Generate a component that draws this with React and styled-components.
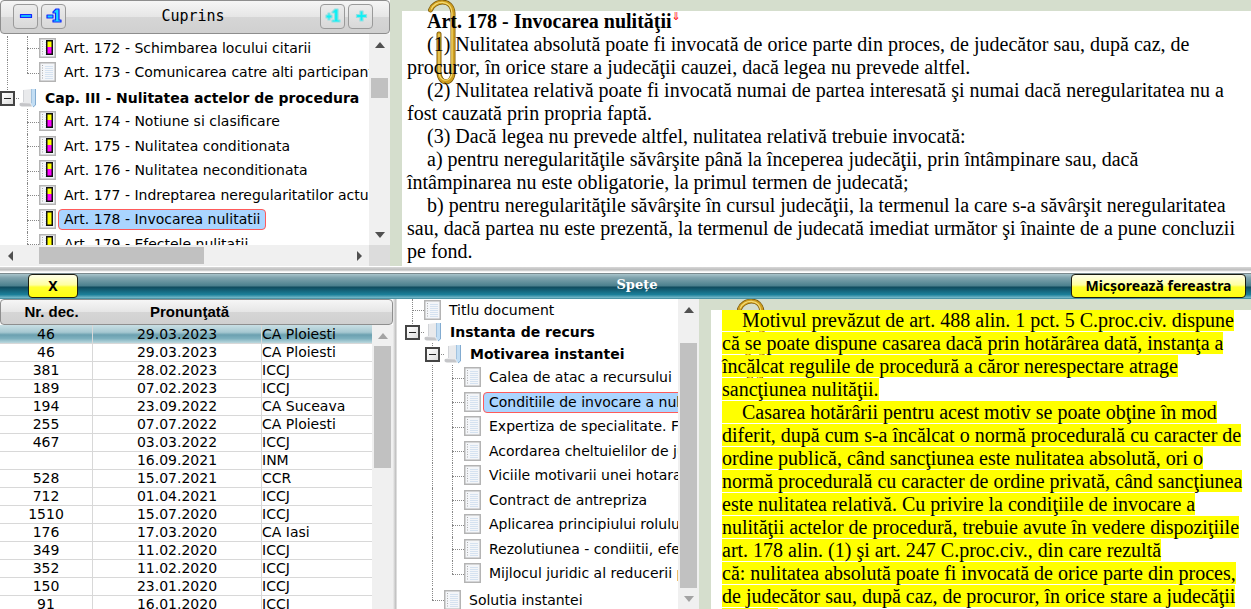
import React from 'react';
import styled, { createGlobalStyle, css } from 'styled-components';

const Green = '#d5decd';
const Track = '#f0f0f0';
const Thumb = '#c1c1c1';
const Highlight = '#ffff00';

const ui = '"DejaVu Sans", Verdana, sans-serif';
const serif = '"Liberation Serif", "Times New Roman", serif';

const articles = [
  { guides: ['line', 'tee'], icon: 'both', label: 'Art. 172 - Schimbarea locului citarii' },
  { guides: ['line', 'end'], icon: 'page', label: 'Art. 173 - Comunicarea catre alti participanti' },
  { guides: ['box'], icon: 'folder', label: 'Cap. III - Nulitatea actelor de procedura', gap: 2 },
  { guides: ['blank', 'tee'], icon: 'both', label: 'Art. 174 - Notiune si clasificare' },
  { guides: ['blank', 'tee'], icon: 'both', label: 'Art. 175 - Nulitatea conditionata' },
  { guides: ['blank', 'tee'], icon: 'both', label: 'Art. 176 - Nulitatea neconditionata' },
  { guides: ['blank', 'tee'], icon: 'both', label: 'Art. 177 - Indreptarea neregularitatilor actului' },
  { guides: ['blank', 'tee'], icon: 'yellow', label: 'Art. 178 - Invocarea nulitatii', selected: true },
  { guides: ['blank', 'tee'], icon: 'yellow', label: 'Art. 179 - Efectele nulitatii' },
];

const sections = [
  { guides: ['tee'], icon: 'page', label: 'Titlu document', short: true },
  { guides: ['box'], icon: 'folder', label: 'Instanta de recurs' },
  { guides: ['blank', 'box'], icon: 'folder', label: 'Motivarea instantei' },
  { guides: ['blank', 'line', 'tee'], icon: 'page', label: 'Calea de atac a recursului' },
  { guides: ['blank', 'line', 'tee'], icon: 'page', label: 'Conditiile de invocare a nulitatii', selected: true },
  { guides: ['blank', 'line', 'tee'], icon: 'page', label: 'Expertiza de specialitate. Forta' },
  { guides: ['blank', 'line', 'tee'], icon: 'page', label: 'Acordarea cheltuielilor de judecata' },
  { guides: ['blank', 'line', 'tee'], icon: 'page', label: 'Viciile motivarii unei hotarari' },
  { guides: ['blank', 'line', 'tee'], icon: 'page', label: 'Contract de antrepriza' },
  { guides: ['blank', 'line', 'tee'], icon: 'page', label: 'Aplicarea principiului rolului activ' },
  { guides: ['blank', 'line', 'tee'], icon: 'page', label: 'Rezolutiunea - condiitii, efecte' },
  { guides: ['blank', 'line', 'end'], icon: 'page', label: 'Mijlocul juridic al reducerii pretului' },
  { guides: ['blank', 'end'], icon: 'page', label: 'Solutia instantei', gap: 2 },
];

const decisions = [
  ['46', '29.03.2023', 'CA Ploiesti'],
  ['46', '29.03.2023', 'CA Ploiesti'],
  ['381', '28.02.2023', 'ICCJ'],
  ['189', '07.02.2023', 'ICCJ'],
  ['194', '23.09.2022', 'CA Suceava'],
  ['255', '07.07.2022', 'CA Ploiesti'],
  ['467', '03.03.2022', 'ICCJ'],
  ['', '16.09.2021', 'INM'],
  ['528', '15.07.2021', 'CCR'],
  ['712', '01.04.2021', 'ICCJ'],
  ['1510', '15.07.2020', 'ICCJ'],
  ['176', '17.03.2020', 'CA Iasi'],
  ['349', '11.02.2020', 'ICCJ'],
  ['352', '11.02.2020', 'ICCJ'],
  ['150', '23.01.2020', 'ICCJ'],
  ['91', '16.01.2020', 'ICCJ'],
];

const GlobalStyle = createGlobalStyle`
  html, body, #root {
    height: 100%;
    margin: 0;
  }
  body {
    overflow: hidden;
    background: #fff;
    color: #000;
    font-family: ${ui};
    font-size: 14px;
  }
  * {
    box-sizing: border-box;
  }
`;

const PageIcon = ({ mark }) => (
  <svg width='17' height='20' viewBox='0 0 17 20' aria-hidden='true'>
    <rect x='0.75' y='0.75' width='15.5' height='18.5' fill='#f4f6f9' stroke='#b4b4b4' strokeWidth='1.5' />
    <path d='M6 4.5h8M6 6.5h8M6 8.5h8M6 10.5h8M6 12.5h8M6 14.5h8M6 16.5h8' stroke='#d5e2f0' />
    <path d='M3.5 3v14' stroke='#aaa' strokeDasharray='1 1.5' />
    {mark && (
      <>
        <rect x='8' y='3' width='5' height='13' fill={mark === 'both' ? '#f0f' : '#ff0'} />
        <rect x='8' y='3' width='5' height='6' fill='#ff0' />
        <rect x='7.75' y='2.75' width='5.5' height='13.5' fill='none' stroke='#111' strokeWidth='1.5' />
      </>
    )}
  </svg>
);

const FolderIcon = () => (
  <svg width='18' height='20' viewBox='0 0 18 20' aria-hidden='true'>
    <path d='M4 2L12 1V16L14 18H2C0 18 0 16 1 15L4 14Z' fill='#e9eaec' />
    <path d='M4.500 2V14' stroke='#d2d4d8' />
    <path d='M1 15C0 17 1 18.500 3 18.500H13L11 15.500Z' fill='#c4c5c8' />
    <path d='M12 1H17V17L14 19L12 16Z' fill='#c3def4' />
    <path d='M16.500 1V17L14 19' fill='none' stroke='#82abd0' />
    <path d='M12.500 1V15' stroke='#a3c3df' />
  </svg>
);

const Clip = () => (
  <svg width='30' height='86' viewBox='0 0 30 86' aria-hidden='true'>
    <g fill='none' strokeLinecap='round'>
      <path d='M3.500 10C7 0 25 -2 26 13V72C26 85 12 85 12 72V34' stroke='#7d5b0c' strokeWidth='5' />
      <path d='M3.500 10C7 0 25 -2 26 13V72C26 85 12 85 12 72V34' stroke='#cf9f20' strokeWidth='3.500' />
      <path d='M4.500 9C8 0 24 -1 25 13V72C25 83 12 83 12 72V34' stroke='#f3da72' strokeWidth='1.200' />
    </g>
  </svg>
);

const StepIcon = ({ sign, one, color, edge }) => (
  <svg width='18' height='18' viewBox='0 0 18 18' aria-hidden='true'>
    <g stroke={edge} strokeWidth='1.2' fill={color} strokeLinejoin='round'>
      {!one && sign === 'minus' && <path d='M3.500 7.500H14.500V10.500H3.500Z' />}
      {!one && sign === 'plus' && <path d='M8 4H11V7.500H14.500V10.500H11V14H8V10.500H4.500V7.500H8Z' />}
      {one && sign === 'minus' && <path d='M2 8H8V11H2Z' />}
      {one && sign === 'plus' && <path d='M4 6H6V8H8V11H6V13H4V11H2V8H4Z' />}
      {one && <path d='M8 5L11 2H14V13H16V15H8V13H10.500V6H8Z' />}
    </g>
  </svg>
);

const Arrow = ({ dir, light }) => {
  const shapes = {
    up: 'M0 8L5 2L10 8Z',
    down: 'M0 2L5 8L10 2Z',
    left: 'M7 0L2 5L7 10Z',
    right: 'M3 0L8 5L3 10Z',
  };
  return (
    <svg width='10' height='10' viewBox='0 0 10 10' aria-hidden='true'>
      <path d={shapes[dir]} fill={light ? '#a3a3a3' : '#505050'} />
    </svg>
  );
};

const Scrollbar = ({ row, before, size, after, topLight, bottomLight, open }) => (
  <Bar $row={row}>
    <BarButton type='button' tabIndex={-1} aria-label={row ? 'Stânga' : 'Sus'}>
      <Arrow dir={row ? 'left' : 'up'} light={topLight} />
    </BarButton>
    <BarTrack $row={row}>
      <BarSpace $grow={before} />
      <BarThumb $grow={size} />
      <BarSpace $grow={after} />
    </BarTrack>
    {!open && (
      <BarButton type='button' tabIndex={-1} aria-label={row ? 'Dreapta' : 'Jos'}>
        <Arrow dir={row ? 'right' : 'down'} light={bottomLight} />
      </BarButton>
    )}
  </Bar>
);

const Tree = ({ items, indent, top }) => (
  <TreeList $indent={indent} $top={top}>
    {items.map((item) => (
      <TreeRow key={item.label} $folder={item.icon === 'folder'} $short={item.short} $gap={item.gap}>
        {item.guides.map((kind, i) => (
          <Guide key={i} $kind={kind}>
            {kind === 'box' && (
              <Toggle type='button' aria-label='Restrânge'>
                <ToggleMark />
              </Toggle>
            )}
          </Guide>
        ))}
        <IconSlot $folder={item.icon === 'folder'} $short={item.short}>
          {item.icon === 'folder' ? (
            <FolderIcon />
          ) : (
            <PageIcon mark={item.icon === 'page' ? null : item.icon} />
          )}
        </IconSlot>
        <TreeLabel href='#' $selected={item.selected} $folder={item.icon === 'folder'}>
          {item.label}
        </TreeLabel>
      </TreeRow>
    ))}
  </TreeList>
);

const App = () => {
  return (
    <Page>
      <GlobalStyle />
      <TopPane>
        <Contents>
          <Toolbar>
            <ToolGroup>
              <ToolButton type='button' aria-label='Restrânge tot'>
                <StepIcon sign='minus' color='#16b7ff' edge='#1524ff' />
              </ToolButton>
              <ToolButton type='button' aria-label='Restrânge un nivel'>
                <StepIcon sign='minus' one color='#16d8ff' edge='#1524ff' />
              </ToolButton>
            </ToolGroup>
            <ToolTitle>Cuprins</ToolTitle>
            <ToolGroup>
              <ToolButton type='button' aria-label='Extinde un nivel'>
                <StepIcon sign='plus' one color='#10f0f4' edge='#8fdfe2' />
              </ToolButton>
              <ToolButton type='button' aria-label='Extinde tot'>
                <StepIcon sign='plus' color='#10f0f4' edge='#8fdfe2' />
              </ToolButton>
            </ToolGroup>
          </Toolbar>
          <TreeFrame>
            <Tree items={articles} indent={0} top={2} />
            <Scrollbar before={23} size={20} after={125} />
            <Scrollbar row before={18} size={166} after={144} />
            <Corner />
          </TreeFrame>
        </Contents>
        <Document>
          <ClipSlot>
            <Clip />
          </ClipSlot>
          <Sheet>
            <Article $pad={5}>
              <h1>
                Art. 178 - Invocarea nulităţii<Mark>⇓</Mark>
              </h1>
              <p>(1) Nulitatea absolută poate fi invocată de orice parte din proces, de judecător sau, după caz, de procuror, în orice stare a judecăţii cauzei, dacă legea nu prevede altfel.</p>
              <p>(2) Nulitatea relativă poate fi invocată numai de partea interesată şi numai dacă neregularitatea nu a fost cauzată prin propria faptă.</p>
              <p>(3) Dacă legea nu prevede altfel, nulitatea relativă trebuie invocată:</p>
              <p>a) pentru neregularităţile săvârşite până la începerea judecăţii, prin întâmpinare sau, dacă întâmpinarea nu este obligatorie, la primul termen de judecată;</p>
              <p>b) pentru neregularităţile săvârşite în cursul judecăţii, la termenul la care s-a săvârşit neregularitatea sau, dacă partea nu este prezentă, la termenul de judecată imediat următor şi înainte de a pune concluzii pe fond.</p>
            </Article>
          </Sheet>
        </Document>
      </TopPane>

      <Splitter />

      <TitleBar>
        <YellowButton type='button' $narrow>
          X
        </YellowButton>
        <h2>Spețe</h2>
        <YellowButton type='button'>Micșorează fereastra</YellowButton>
      </TitleBar>

      <BottomPane>
        <Decisions>
          <DecisionTable>
            <thead>
              <tr>
                <th>Nr. dec.</th>
                <th>Pronunţată</th>
                <th aria-label='Instanţa' />
              </tr>
            </thead>
            <tbody>
              {decisions.map(([number, date, court], i) => (
                <DecisionRow key={i} $selected={i === 0}>
                  <td>{number}</td>
                  <td>{date}</td>
                  <td>{court}</td>
                </DecisionRow>
              ))}
            </tbody>
          </DecisionTable>
          <TableScroll>
            <Scrollbar before={0} size={122} after={142} topLight open />
          </TableScroll>
        </Decisions>
        <ColumnSplitter />
        <SectionFrame>
          <Tree items={sections} indent={8} top={0} />
          <Scrollbar before={23} size={250} after={0} bottomLight />
        </SectionFrame>
        <Document>
          <ClipSlot>
            <Clip />
          </ClipSlot>
          <Sheet>
            <Article $pad={11} $marked>
              <p>
                <mark>&nbsp;&nbsp;&nbsp;&nbsp;Motivul prevăzut de art. 488 alin. 1 pct. 5 C.proc.civ. dispune că&nbsp;se poate dispune casarea dacă prin hotărârea dată, instanţa a încălcat regulile de procedură a căror nerespectare atrage sancţiunea nulităţii.</mark>
              </p>
              <p>
                <mark>&nbsp;&nbsp;&nbsp;&nbsp;Casarea hotărârii pentru acest motiv se poate obţine în mod diferit, după cum s-a încălcat o normă procedurală cu caracter de ordine publică, când sancţiunea este nulitatea absolută, ori o normă procedurală cu caracter de ordine privată, când sancţiunea este nulitatea relativă. Cu privire la condiţiile de invocare a nulităţii actelor de procedură, trebuie avute în vedere dispoziţiile art. 178 alin. (1) şi art. 247 C.proc.civ., din care rezultă că:&nbsp;nulitatea absolută poate fi invocată de orice parte din proces, de judecător sau, după caz, de procuror, în orice stare a judecăţii cauzei.</mark>
              </p>
            </Article>
          </Sheet>
        </Document>
      </BottomPane>
    </Page>
  );
};

export default App;

const Page = styled.div`
  display: grid;
  grid-template-rows: minmax(0, 133fr) 7px 26px minmax(0, 155fr);
  height: 100vh;
`;

const TopPane = styled.section`
  display: grid;
  grid-template-columns: 390px minmax(0, 1fr);
  min-height: 0;
`;

const BottomPane = styled.section`
  display: grid;
  grid-template-columns: 393px 4px 302px minmax(0, 1fr);
  min-height: 0;
`;

const Contents = styled.nav`
  display: flex;
  flex-direction: column;
  min-height: 0;
`;

const raised = css`
  border: 1px solid #8e8e8e;
  border-radius: 4px;
  background: linear-gradient(#f6f6f6, #e6e6e6 49%, #d6d6d6 50%, #d0d0d0);
`;

const Toolbar = styled.header`
  ${raised}
  display: flex;
  align-items: center;
  justify-content: space-between;
  flex: none;
  height: 34px;
  padding: 0 16px 2px 12px;
`;

const ToolGroup = styled.div`
  display: flex;
  gap: 3px;
`;

const ToolButton = styled.button`
  display: grid;
  place-items: center;
  width: 25px;
  height: 25px;
  padding: 0;
  border: 1px solid #9a9a9a;
  border-radius: 4px;
  background: linear-gradient(#ececec, #d8d8d8);
`;

const ToolTitle = styled.span`
  font-family: 'DejaVu Sans Mono', monospace;
  font-size: 15px;
`;

const TreeFrame = styled.div`
  display: grid;
  flex: 1;
  grid-template-columns: minmax(0, 1fr) 21px;
  grid-template-rows: minmax(0, 1fr) 21px;
  min-height: 0;
`;

const SectionFrame = styled.div`
  display: grid;
  grid-template-columns: minmax(0, 1fr) 21px;
  grid-template-rows: minmax(0, 1fr);
  min-height: 0;
`;

const TreeList = styled.ul`
  min-height: 0;
  margin: 0;
  padding: ${(props) => props.$top}px 0 0 ${(props) => props.$indent}px;
  overflow: hidden;
  list-style: none;
`;

const TreeRow = styled.li`
  display: flex;
  align-items: center;
  box-sizing: content-box;
  height: ${(props) => (props.$folder || props.$short ? 22 : 24)}px;
  padding-top: ${(props) => props.$gap || 0}px;
  white-space: nowrap;
  &:nth-child(even) {
    height: ${(props) => (props.$folder ? 22 : 25)}px;
  }
`;

const Guide = styled.span`
  display: grid;
  grid-template-columns: 7px 1fr;
  grid-template-rows: 1fr 1fr;
  align-self: stretch;
  flex: none;
  width: ${(props) => (props.$kind === 'line' || props.$kind === 'blank' ? 20 : 19)}px;
  &::before {
    content: '';
    grid-column: 2;
    grid-row: ${(props) => (props.$kind === 'line' || props.$kind === 'tee' ? '1 / 3' : '1')};
    border-left: ${(props) => (props.$kind === 'blank' ? 'none' : '1px dotted #888')};
  }
  &::after {
    content: '';
    grid-column: 2;
    grid-row: 2;
    height: 1px;
    border-top: ${(props) => (props.$kind === 'line' || props.$kind === 'blank' ? 'none' : '1px dotted #888')};
  }
`;

const Toggle = styled.button`
  display: grid;
  place-items: center;
  grid-column: 1 / 3;
  grid-row: 1 / 3;
  align-self: center;
  z-index: 1;
  width: 15px;
  height: 15px;
  padding: 0;
  border: 2px solid #444;
  background: linear-gradient(135deg, #fff, #ddd);
`;

const ToggleMark = styled.span`
  width: 7px;
  height: 1px;
  background: #222;
`;

const IconSlot = styled.span`
  display: flex;
  align-self: flex-start;
  flex: none;
  width: ${(props) => (props.$folder ? 20 : 19)}px;
  padding-top: ${(props) => (props.$folder || props.$short ? 1 : 2)}px;
`;

const TreeLabel = styled.a`
  padding: 0 5px;
  border: 1px solid ${(props) => (props.$selected ? '#ff5a5a' : 'transparent')};
  border-radius: 4px;
  background: ${(props) => (props.$selected ? '#aad5ff' : 'transparent')};
  color: #000;
  font-size: 14px;
  font-weight: ${(props) => (props.$folder ? 'bold' : 'normal')};
  line-height: 19px;
  text-decoration: none;
`;

const Bar = styled.div`
  display: flex;
  flex-direction: ${(props) => (props.$row ? 'row' : 'column')};
  min-width: 0;
  min-height: 0;
  background: ${Track};
`;

const BarButton = styled.button`
  display: grid;
  place-items: center;
  flex: none;
  width: 21px;
  height: 21px;
  padding: 0;
  border: 0;
  background: none;
`;

const BarTrack = styled.div`
  display: flex;
  flex: 1;
  flex-direction: inherit;
  min-height: 0;
  padding: ${(props) => (props.$row ? '2px 0' : '0 2px')};
`;

const BarSpace = styled.span`
  flex: ${(props) => props.$grow} 0 0;
`;

const BarThumb = styled.span`
  flex: ${(props) => props.$grow} 0 0;
  background: ${Thumb};
`;

const Corner = styled.div`
  background: #dcdcdc;
`;

const Document = styled.main`
  position: relative;
  min-width: 0;
  min-height: 0;
  padding: 11px 0 0 12px;
  overflow: hidden;
  background: linear-gradient(#fff, #fff) 12px 11px no-repeat ${Green};
`;

const ClipSlot = styled.div`
  position: absolute;
  top: 0;
  left: 37px;
`;

const Sheet = styled.div`
  position: relative;
  height: 100%;
  overflow: hidden;
`;

const Article = styled.article`
  margin-top: -1px;
  padding: 0 5px 0 ${(props) => props.$pad}px;
  font-family: ${serif};
  font-size: 20px;
  line-height: 23px;
  h1,
  p {
    margin: 0;
    font-size: 20px;
    text-indent: ${(props) => (props.$marked ? 0 : 20)}px;
  }
  mark {
    background: ${Highlight};
    color: #000;
  }
`;

const Mark = styled.sup`
  color: #f00;
  font-family: 'DejaVu Sans', sans-serif;
  font-size: 11px;
  font-weight: normal;
  line-height: 0;
`;

const Splitter = styled.div`
  background: linear-gradient(#fff 0 1px, #d8d8d8 1px, #bcbcbc 4px, #e4e4e4 5px, #fff 6px);
`;

const ColumnSplitter = styled.div`
  border-right: 1px solid #ddd;
  background: linear-gradient(90deg, #eee, #bbb);
`;

const TitleBar = styled.header`
  display: grid;
  grid-template-columns: 1fr auto 1fr;
  align-items: start;
  padding: 0 5px 0 28px;
  border-top: 1px solid #7b8a8e;
  background: linear-gradient(#a9c4cb, #7fa3ad 15%, #4a7f8d 48%, #0f4a5d 52%, #1b7f99 82%, #6db3c4 94%, #3a8496);
  h2 {
    margin: 0;
    color: #fff;
    font-family: 'DejaVu Serif', serif;
    font-size: 13px;
    line-height: 22px;
  }
`;

const YellowButton = styled.button`
  justify-self: ${(props) => (props.$narrow ? 'start' : 'end')};
  width: ${(props) => (props.$narrow ? 50 : 175)}px;
  height: 24px;
  padding: 0;
  border: 1px solid #1c1c10;
  border-radius: 4px;
  background: linear-gradient(#ffffe8, #ffffa0 45%, #ffff30 55%, #ffff10);
  color: #000;
  font-family: 'Noto Sans', sans-serif;
  font-size: 14px;
  font-weight: bold;
  line-height: 22px;
  white-space: nowrap;
`;

const Decisions = styled.div`
  display: grid;
  grid-template-columns: minmax(0, 1fr) 21px;
  grid-template-rows: minmax(0, 1fr);
  min-height: 0;
  overflow: hidden;
`;

const DecisionTable = styled.table`
  display: block;
  min-height: 0;
  thead,
  tbody {
    display: block;
  }
  thead {
    width: calc(100% + 21px);
  }
  thead tr {
    ${raised}
    display: grid;
    grid-template-columns: 101px 175px 1fr;
    height: 26px;
  }
  th {
    padding: 0;
    font-family: 'Liberation Sans', Arial, sans-serif;
    font-size: 15px;
    line-height: 24px;
  }
`;

const DecisionRow = styled.tr`
  display: grid;
  grid-template-columns: 93px 169px 1fr;
  height: 18px;
  background: ${(props) =>
    props.$selected ? 'linear-gradient(#c9dfe4, #a6c8d1 40%, #6ba0b0 55%, #7db0be 75%, #bcd8de)' : '#fff'};
  td {
    padding: 0;
    border-right: 1px solid #d8d8d8;
    border-bottom: 1px solid #d8d8d8;
    font-size: 14px;
    line-height: 18px;
    text-align: center;
  }
  td:last-child {
    border-right: 0;
    text-align: left;
  }
`;

const TableScroll = styled.div`
  display: grid;
  min-height: 0;
  padding-top: 26px;
`;
